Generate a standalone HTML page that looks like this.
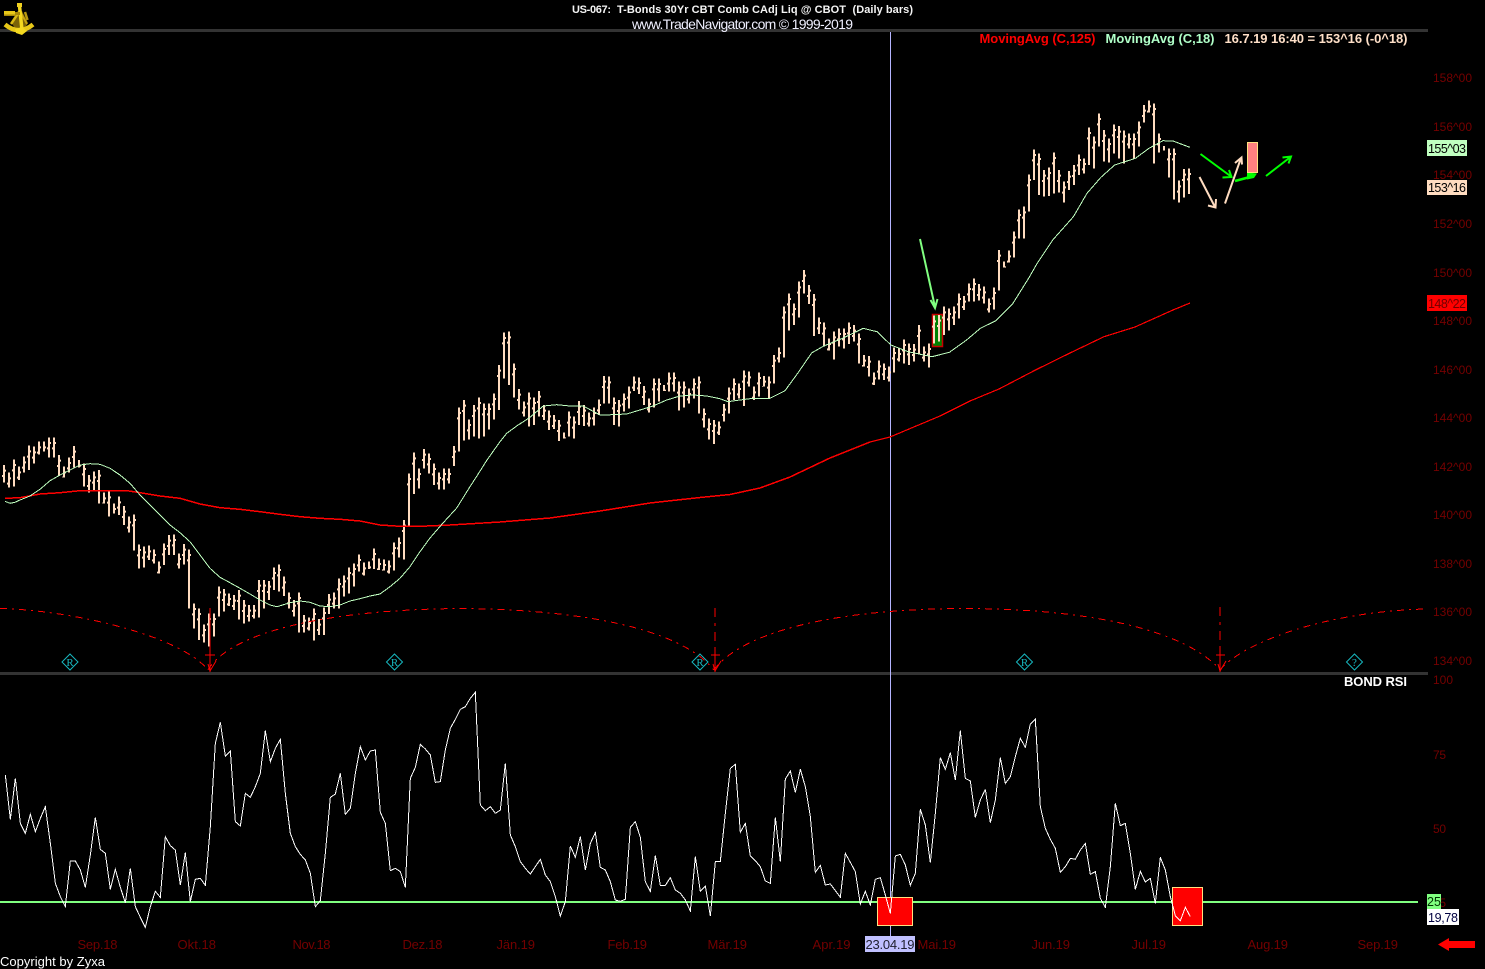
<!DOCTYPE html>
<html><head><meta charset="utf-8"><title>US-067 T-Bonds</title>
<style>
html,body{margin:0;padding:0;background:#000;width:1485px;height:969px;overflow:hidden}
svg{display:block}
text{font-family:"Liberation Sans",sans-serif;white-space:pre}
.ax{font-size:12px;fill:#740000}
.mo{font-size:13px;fill:#740000}
</style></head><body>
<svg width="1485" height="969" viewBox="0 0 1485 969" xmlns="http://www.w3.org/2000/svg">
<rect width="1485" height="969" fill="#000"/>
<defs>
<g id="B">
<path transform="translate(0,420) scale(1,.33333)" d="M5 135V188M10 158V202M15 118V200M20 140V180M25 110V157M30 77V150M35 80V130M40 65V103M45 65V95M50 52V112M55 52V113M60 105V168M65 140V172M70 112V158M75 78V142M80 120V142M85 130V200M90 165V218M95 155V215M100 150V250M105 218V250M110 215V290M115 250V280M120 230V285M125 258V315M130 290V338M135 283V392M140 373V445M145 380V442M150 377V420M155 388V430M160 425V460M165 370V435M170 345V405M175 343V405M180 400V445M185 372V433M190 388V565M195 550V625M200 565V660M205 613V668M210 580V680M215 580V650M220 500V590M225 507V575M230 520V558M235 525V570M240 510V598M245 540V610M250 555V605M255 555V595M260 480V592M265 480V565M270 483V540M275 442V510M280 433V515M285 470V528M290 517V565M295 540V590M300 517V638M305 585V638M310 592V632M315 565V662M320 597V645M325 562V645M330 522V582M335 518V565M340 475V565M345 467V530M350 442V520M355 430V500M360 403V455M365 428V467M370 425V447M375 385V447M380 415V450M385 418V452M390 422V460M395 367V452M400 352V412M405 300V418M410 160V318M415 98V222M420 145V205"/>
<path transform="translate(0,320) scale(1,.33333)" d="M425 387V445M430 400V460M435 430V495M440 457V508M445 445V508M450 445V490M455 378V438M460 262V395M465 240V362M470 298V358M475 255V350M480 232V355M485 250V350M490 250V328M495 220V298M500 135V270M505 37V175M510 35V195M515 130V232M520 207V268M525 245V290M530 218V320M535 232V315M540 213V290M545 255V300M550 272V330M555 285V327M560 300V363M565 338V355M570 275V350M575 290V355M580 243V315M585 255V318M590 278V320M595 262V316M600 238V285M605 168V250M610 170V250M615 232V315M620 240V320M625 220V275M630 200V265M635 170V213M640 172V222M645 198V255M650 235V278M655 175V262M660 175V245M665 195V213M670 158V215M675 157V215M680 185V272M685 185V262M690 205V250M695 175V235M700 170V280M705 265V322M710 295V358M715 300V372M720 305V345M725 252V305M730 203V280M735 175V240M740 190V235M745 152V258M750 155V200M755 200V240M760 157V230M765 168V200M770 170V235"/>
<path transform="translate(0,90) scale(1,.33333)" d="M775 795V880M780 772V818M785 650V802M790 610V722M795 640V705M800 575V682M805 540V610M810 585V642M815 612V738M820 682V732M825 698V770M830 745V782M835 725V808M840 715V770M845 715V775M850 697V762M855 705V755M860 730V820M865 795V830M870 798V860M875 848V885M880 812V868M885 820V870M890 830V875M895 772V848M900 775V815M905 748V820M910 760V825M915 762V815M920 705V790M925 770V815M930 760V833M935 677V760M940 675V755M945 650V735M950 655V722M955 650V705M960 610V685M965 618V660M970 580V635M975 565V635M980 582V632M985 590V640M990 625V668M995 592V658M1000 480V602M1005 515V533M1010 482V518M1015 425V502M1020 358V445M1025 350V445M1030 253V365M1035 178V270M1040 190V315M1045 240V320M1050 232V318M1055 187V310M1060 240V308M1065 275V338M1070 243V300M1075 225V285M1080 193V255M1085 205V250M1090 112V225M1095 140V235M1100 70V170M1105 120V215M1110 145V218M1115 103V190M1120 108V205M1125 122V220M1130 130V175M1135 130V205M1140 95V170M1145 45V98M1150 32V68M1155 40V220M1160 130V188M1165 168V182M1170 175V262M1175 175V328M1180 272V338M1185 237V322M1190 235V312"/>
</g>
</defs>

<!-- separators -->
<rect x="0" y="29" width="1428" height="3" fill="#333"/>
<rect x="0" y="672" width="1428" height="3" fill="#333"/>

<!-- crosshair -->
<rect x="890" y="32" width="1" height="905" fill="#b4b4ff"/>

<!-- title -->
<g font-size="11" font-weight="bold" fill="#f4f4f4">
<text x="572" y="13" textLength="39">US-067:</text>
<text x="617" y="13" textLength="229">T-Bonds 30Yr CBT Comb CAdj Liq @ CBOT</text>
<text x="852.500" y="13" textLength="60.500">(Daily bars)</text>
</g>
<text x="632" y="29" font-size="14" fill="#f0f0ff" textLength="221">www.TradeNavigator.com © 1999-2019</text>

<!-- legend -->
<text x="979.5" y="43" font-size="13" font-weight="bold" fill="#ff0000" textLength="116">MovingAvg (C,125)</text>
<text x="1105.5" y="43" font-size="13" font-weight="bold" fill="#b0ffc8" textLength="109">MovingAvg (C,18)</text>
<text x="1224.5" y="43" font-size="13" font-weight="bold" fill="#ffe0c8" textLength="183">16.7.19 16:40 = 153^16 (-0^18)</text>

<!-- y axis -->
<text class="ax" x="1433" y="82" textLength="39">158^00</text>
<text class="ax" x="1433" y="131" textLength="39">156^00</text>
<text class="ax" x="1433" y="179" textLength="39">154^00</text>
<text class="ax" x="1433" y="228" textLength="39">152^00</text>
<text class="ax" x="1433" y="277" textLength="39">150^00</text>
<text class="ax" x="1433" y="325" textLength="39">148^00</text>
<text class="ax" x="1433" y="374" textLength="39">146^00</text>
<text class="ax" x="1433" y="422" textLength="39">144^00</text>
<text class="ax" x="1433" y="471" textLength="39">142^00</text>
<text class="ax" x="1433" y="519" textLength="39">140^00</text>
<text class="ax" x="1433" y="568" textLength="39">138^00</text>
<text class="ax" x="1433" y="616" textLength="39">136^00</text>
<text class="ax" x="1433" y="665" textLength="39">134^00</text>
<text class="ax" x="1433" y="684" textLength="20">100</text>
<text class="ax" x="1433" y="759" textLength="13">75</text>
<text class="ax" x="1433" y="833" textLength="13">50</text>
<text class="ax" x="1433" y="907" textLength="13">25</text>

<!-- price tags -->
<rect x="1427" y="140" width="40" height="16" fill="#c0ffc0"/>
<text x="1428" y="153" font-size="12.5" fill="#000" textLength="38">155^03</text>
<rect x="1427" y="180" width="40" height="15" fill="#ffdcc0"/>
<text x="1428" y="192" font-size="12.5" fill="#000" textLength="38">153^16</text>
<rect x="1427" y="295" width="40" height="16" fill="#ff0000"/>
<text x="1428" y="308" font-size="12.5" fill="#700000" textLength="38">148^22</text>

<!-- green signal box (behind bars) -->
<rect x="932.5" y="314.5" width="10" height="32" fill="#008000" stroke="#c80000" stroke-width="1.5"/>

<!-- bars -->
<g fill="none" stroke="#ffdcc0" shape-rendering="crispEdges">
<use href="#B" x="-1" stroke-width="2"/>
<use href="#B" x="-2.5" stroke-width="1" stroke-dasharray="0 30 6 9999"/>
<use href="#B" x="0.5" stroke-width="1" stroke-dasharray="0 14 6 9999"/>
</g>

<!-- MA 125 -->
<polyline fill="none" stroke="#ff0000" stroke-width="1.500" shape-rendering="crispEdges" points="5,498.3 20,497.7 40,494 60,492.7 80,490.7 100,490.7 127,490.7 140,492.7 160,496 180,498.3 200,504 220,507.7 240,509.3 260,511.7 280,514.3 300,516.7 320,518.3 340,519.3 360,521 380,525 400,526.3 420,526.3 450,525 500,522 550,518 600,511 650,503 700,497.5 730,494.5 760,488 790,477 830,458 870,442"/>
<polyline fill="none" stroke="#ff0000" stroke-width="1.200" shape-rendering="crispEdges" points="870,442 890,437 940,416 970,401 999,389 1035.5,370 1070,353 1104,336.7 1135,327 1173,310 1190,303"/>

<!-- MA 18 -->
<polyline fill="none" stroke="#c0ffc0" stroke-width="1" shape-rendering="crispEdges" points="5,501.3 10,503.3 15,502.3 20,500 30,496 40,489.3 50,480.7 60,475 70,470 80,465 90,463.7 100,464.3 110,468.3 120,475 130,483.3 140,495 150,505 160,515 170,525 180,532.7 190,541.7 200,555 210,568.3 220,577.3 230,582.7 240,588.3 250,594 260,600 270,605 277,606.7 290,602.7 300,601 310,602.3 320,606 330,606.7 340,605 350,601 360,598.7 370,596 380,594 390,586.7 400,578.3 410,566.7 420,551.7 430,538 443,523 456.7,508 470,486.7 479,472.7 487,460 500,441.7 506.7,433.3 516.7,426 530,417.3 543.3,406 556.7,404.7 570,406 583.3,406 600,415 613,414.7 626.7,414 640,410 653,406 666.7,400 680,396 693,395 706.7,396 720,398.7 728,401.7 740,400 753,398.3 770,398.3 785,390.7 797.9,373 811.6,353 823.7,346 842.6,338.3 863.3,328.3 877,331.7 890.9,345 908,351.7 932,356.7 949.4,352.3 966.6,340 980.4,328.3 995.9,320.7 1013,303.3 1028.6,278.3 1037.2,263.3 1052.7,240 1073.4,216.7 1087,193.3 1100.9,177.3 1114.7,165 1135.4,158.3 1149,148.3 1162.9,140.7 1173,141 1189.8,147.3"/>

<!-- cycle curves -->
<g fill="none" stroke="#ff0000" stroke-width="1" stroke-dasharray="7 5 2 5" shape-rendering="crispEdges">
<path d="M0 608.5C70 610 180 635 208 670"/>
<path d="M208 670C225 640 300 610 460 608.5C620 610 690 640 714 670"/>
<path d="M714 670C735 640 810 609 965 608.5C1120 609 1195 640 1220 670"/>
<path d="M1220 670C1240 645 1320 612 1425 609"/>
</g>
<g fill="none" stroke="#ff0000" stroke-width="1" shape-rendering="crispEdges">
<path d="M210 608V672M205 655H215M715 608V617M715 623V626M715 632V641M715 647V672M711 655H720M1220 607V616M1220 622V625M1220 631V640M1220 646V672M1216 655H1225"/>
</g>
<g fill="none" stroke="#ff0000" stroke-width="1">
<path d="M208 664L210 671L216 661"/><path d="M713 664L715 671L721 661"/><path d="M1218 664L1220 671L1226 661"/>
</g>

<!-- cycle diamonds -->
<g fill="none" stroke="#18b8c0" stroke-width="1">
<path d="M70 654L78 662L70 670L62 662Z"/>
<path d="M394.500 654L402.500 662L394.500 670L386.500 662Z"/>
<path d="M700 654L708 662L700 670L692 662Z"/>
<path d="M1024.500 654L1032.500 662L1024.500 670L1016.500 662Z"/>
<path d="M1354.500 654L1362.500 662L1354.500 670L1346.500 662Z"/>
</g>
<g font-size="11" text-anchor="middle">
<text x="70" y="666" fill="#18b8c0" style='font-family:"Liberation Serif",serif'>R</text>
<text x="394.500" y="666" fill="#18b8c0" style='font-family:"Liberation Serif",serif'>R</text>
<text x="700" y="666" fill="#18b8c0" style='font-family:"Liberation Serif",serif'>R</text>
<text x="1024.500" y="666" fill="#18b8c0" style='font-family:"Liberation Serif",serif'>R</text>
<text x="1354.500" y="666" fill="#18b8c0" style='font-family:"Liberation Serif",serif'>?</text>
</g>

<!-- hand-drawn arrows -->
<g fill="none" stroke-width="2">
<path stroke="#80ff80" d="M920 239L935 307M930.500 300L935 308L937.500 299"/>
<path stroke="#ffdcc0" d="M1199.500 177L1215 207M1208 205.500L1215.500 207.500L1216 199"/>
<path stroke="#ffdcc0" d="M1225 203.500L1241 158M1235 163L1241.500 157.500L1242 164.500"/>
<path stroke="#00ff00" d="M1200.500 154L1231 176.500M1222.500 177.500L1231.500 177L1229 170"/>
<path stroke="#00ff00" stroke-width="2.500" d="M1235 181L1250 177"/>
<path stroke="#00ff00" d="M1266 176L1290.500 157M1282.500 157.500L1291 156.500L1288.500 163.500"/>
</g>
<polygon points="1247,172.500 1257,173.500 1254,178 1247,179.500" fill="#00ff00"/>
<rect x="1247.500" y="142.500" width="10" height="30" fill="#ff8080" stroke="#ffe080" stroke-width="1"/>

<!-- RSI panel -->
<text x="1344" y="686" font-size="13" font-weight="bold" fill="#ffffff" textLength="63">BOND RSI</text>
<rect x="0" y="901" width="1418" height="2" fill="#80ff80"/>
<rect x="877.500" y="897.500" width="35" height="28" fill="#ff0000" stroke="#ffe080" stroke-width="1"/>
<rect x="1172.500" y="887.500" width="30" height="38" fill="#ff0000" stroke="#ffe080" stroke-width="1"/>

<g fill="none" stroke="#ffffff" stroke-width="3" stroke-linejoin="miter" shape-rendering="crispEdges">
<polyline transform="translate(0,680) scale(.33333)" points="16,285 31,418 46,295 61,430 76,460 91,403 106,455 121,415 136,380 151,490 166,610 181,650 196,680 211,543 226,543 241,570 256,622 271,525 286,412 301,508 316,520 331,628 346,568 361,622 376,668 391,565 406,680 421,712 436,742 451,680 466,634 481,652 496,470 511,497 526,510 541,615 556,518 571,665 586,598 601,595 616,616 631,440 646,190 661,127 676,228 691,213 706,425 721,438 736,340 751,352 766,320 781,280 796,152 811,245 826,205 841,178 856,340 871,460 886,500 901,523 916,540 931,580 946,680 961,662 976,520 991,352 1006,342 1021,280 1036,403 1051,385 1066,280 1081,200 1096,240 1111,213 1126,210 1141,397 1156,430 1171,572 1186,565 1201,575 1216,622 1231,295 1246,262 1261,193 1276,207 1291,225 1306,307 1321,305 1336,210 1351,145 1366,118 1381,88 1396,80 1411,55 1426,37 1441,375 1456,392 1471,380 1486,400"/>
<polyline transform="translate(490,680) scale(.33333)" points="16,400 31,390 46,250 61,465 76,500 91,545 106,565 121,582 136,560 151,538 166,585 181,605 196,650 211,708 226,665 241,498 256,532 271,470 286,570 301,490 316,458 331,562 346,570 361,605 376,660 391,664 406,658 421,442 436,425 451,472 466,605 481,634 496,527 511,616 526,616 541,593 556,630 571,640 586,660 601,693 616,530 631,634 646,618 661,708 676,545 691,544 706,400 721,265 736,253 751,457 766,430 781,528 796,542 811,560 826,603 841,610 856,412 871,545 886,297 901,273 916,337 931,268 946,320 961,410 976,577 991,556 1006,615 1021,612 1036,632 1051,652 1066,520 1081,547 1096,575 1111,672 1126,634 1141,675 1156,598 1171,593 1186,645 1201,700 1216,528 1231,523 1246,555 1261,616 1276,580 1291,388 1306,435 1321,548 1336,400 1351,233 1366,268 1381,218 1396,300 1411,152 1426,295 1441,303 1456,412 1471,360 1486,328"/>
<polyline transform="translate(985,680) scale(.33333)" points="1,328 16,428 31,360 46,233 61,310 76,290 91,230 106,175 121,202 136,132 151,118 166,380 181,445 196,478 211,505 226,577 241,560 256,535 271,538 286,510 301,490 316,583 331,575 346,655 361,682 376,560 391,370 406,437 421,430 436,520 451,628 466,574 481,606 496,595 511,670 526,532 541,570 556,650 571,707 586,722 601,682 616,710"/>
</g>

<!-- RSI tags -->
<rect x="1427" y="894" width="14" height="16" fill="#80ff80"/>
<text x="1427" y="906" font-size="12.500" fill="#003000" textLength="14">25</text>
<rect x="1427" y="909" width="32" height="16" fill="#ffffff"/>
<text x="1428" y="922" font-size="12.500" fill="#000040" textLength="30">19,78</text>

<!-- months -->
<text class="mo" x="77.500" y="949" textLength="40">Sep.18</text>
<text class="mo" x="177.500" y="949" textLength="38.500">Okt.18</text>
<text class="mo" x="292.500" y="949" textLength="38">Nov.18</text>
<text class="mo" x="402.500" y="949" textLength="40">Dez.18</text>
<text class="mo" x="496.500" y="949" textLength="38.500">Jän.19</text>
<text class="mo" x="607.500" y="949" textLength="39.500">Feb.19</text>
<text class="mo" x="707.500" y="949" textLength="39.500">Mär.19</text>
<text class="mo" x="812.500" y="949" textLength="38">Apr.19</text>
<rect x="865" y="936" width="50" height="16" fill="#c0c0ff"/>
<text x="865.500" y="949" font-size="13" fill="#202030" textLength="49">23.04.19</text>
<text class="mo" x="917.500" y="949" textLength="38.500">Mai.19</text>
<text class="mo" x="1031.500" y="949" textLength="38.500">Jun.19</text>
<text class="mo" x="1131.500" y="949" textLength="34.500">Jul.19</text>
<text class="mo" x="1247.500" y="949" textLength="40.500">Aug.19</text>
<text class="mo" x="1357.500" y="949" textLength="40.500">Sep.19</text>

<polygon points="1438,944.500 1449,938 1449,941 1475,941 1475,948 1449,948 1449,951" fill="#ff0000"/>

<text x="0" y="966" font-size="13" fill="#ffffff" textLength="105">Copyright by Zyxa</text>

<!-- sextant logo -->
<polygon points="12,23 18,11 22,11 28,23 24,29 15,29" fill="#7a6208"/>
<g fill="none" stroke-linecap="butt">
<path d="M5 24.500Q19 36 33 24.500" stroke="#e8c818" stroke-width="4.500"/>
<path d="M11 24L19 12" stroke="#d8b814" stroke-width="2.500"/>
<path d="M27 24L21 13" stroke="#c8a410" stroke-width="2"/>
<path d="M19.500 6L22 30" stroke="#f4d820" stroke-width="3.500"/>
<path d="M25 12L27.500 20" stroke="#b89810" stroke-width="2.500"/>
</g>
<rect x="4" y="11" width="11" height="5" fill="#e8c818"/>
<rect x="4" y="14.500" width="11" height="1.500" fill="#a88808"/>
<rect x="15" y="12" width="5" height="3" fill="#a88808"/>
<rect x="17" y="3" width="5" height="4" fill="#f0d020"/>
<polygon points="15,29 22,27 27,31 22,35 16,33" fill="#f4d820"/>
</svg>
</body></html>
